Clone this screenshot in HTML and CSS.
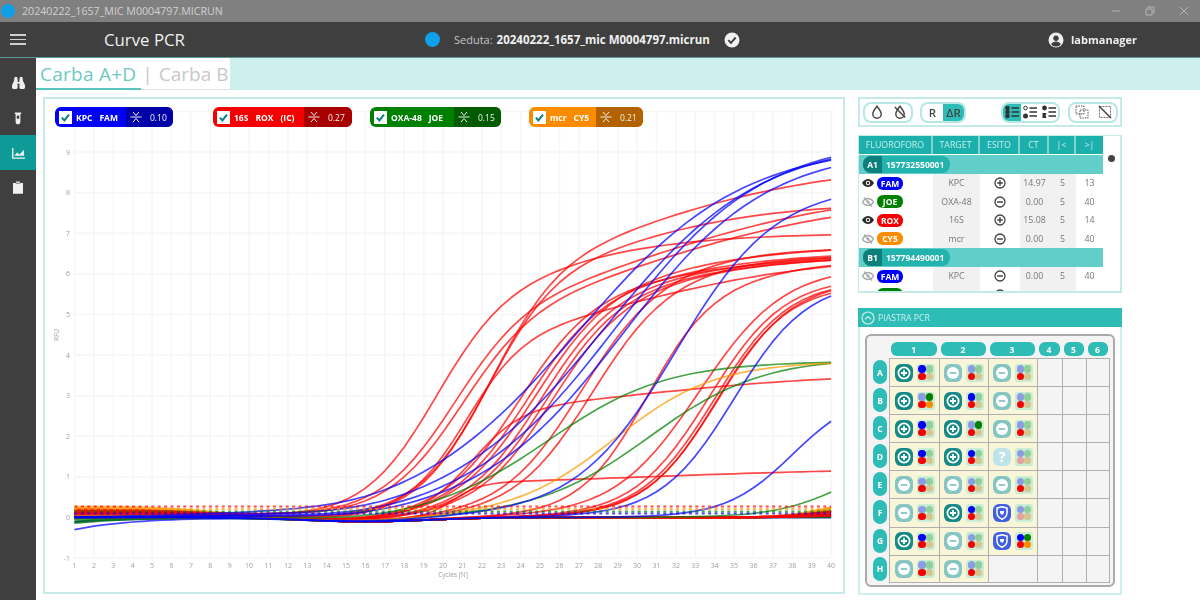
FILE: index.html
```html
<!DOCTYPE html>
<html lang="it">
<head>
<meta charset="utf-8">
<title>Curve PCR</title>
<link rel="stylesheet" href="styles.css">
</head>
<body>
<svg class="defs" width="0" height="0" aria-hidden="true">
  <symbol id="thr" viewBox="0 0 14 12"><path d="M1.500 6H12.500M4 1l3 3.500L10 1M4 11l3-3.500L10 11" fill="none" stroke="currentColor" stroke-width="1"/></symbol>
  <symbol id="chk" viewBox="0 0 12 12"><path d="M2 6.200l2.800 3 5-6.300" fill="none" stroke="#0e7f86" stroke-width="2.200"/></symbol>
  <symbol id="eye" viewBox="0 0 12 8"><path d="M0 4C2 1 4 0 6 0s4 1 6 4c-2 3-4 4-6 4S2 7 0 4z" fill="#2a2a2a"/><circle cx="6" cy="4" r="2.200" fill="#fff"/><circle cx="6" cy="4" r="1.200" fill="#2a2a2a"/></symbol>
  <symbol id="eyeoff" viewBox="0 0 12 10"><path d="M.5 5C2 2.500 4 1.500 6 1.500s4 1 5.500 3.500C10 7.500 8 8.500 6 8.500S2 7.500 .5 5z" fill="none" stroke="#a9a9a9" stroke-width="1.300"/><circle cx="6" cy="5" r="1.500" fill="#a9a9a9"/><path d="M2 .5l8 9" stroke="#a9a9a9" stroke-width="1.200"/></symbol>
  <symbol id="plus" viewBox="0 0 12 12"><circle cx="6" cy="6" r="5" fill="none" stroke="#444" stroke-width="1.300"/><path d="M3.200 6h5.600M6 3.200v5.600" stroke="#444" stroke-width="1.500"/></symbol>
  <symbol id="minus" viewBox="0 0 12 12"><circle cx="6" cy="6" r="5" fill="none" stroke="#444" stroke-width="1.300"/><path d="M3.200 6h5.600" stroke="#444" stroke-width="1.500"/></symbol>
  <symbol id="drop" viewBox="0 0 12 14"><path d="M6 1.200C4 4 1.800 6.500 1.800 9a4.200 4.200 0 0 0 8.400 0C10.200 6.500 8 4 6 1.200z" fill="none" stroke="#444" stroke-width="1.400"/></symbol>
  <symbol id="dropoff" viewBox="0 0 12 14"><path d="M6 1.200C4 4 1.800 6.500 1.800 9a4.200 4.200 0 0 0 8.400 0C10.200 6.500 8 4 6 1.200z" fill="none" stroke="#444" stroke-width="1.400"/><path d="M.8 2l10.400 10.500" stroke="#444" stroke-width="1.400"/></symbol>
  <symbol id="list1" viewBox="0 0 14 14"><circle cx="2.500" cy="3" r="2.300" fill="#333"/><circle cx="2.500" cy="7" r="2.300" fill="#333"/><circle cx="2.500" cy="11" r="2.300" fill="#333"/><path d="M6.500 3H14M6.500 7H14M6.500 11H14" stroke="#333" stroke-width="1.500"/></symbol>
  <symbol id="list2" viewBox="0 0 14 14"><circle cx="2.500" cy="3" r="1.800" fill="none" stroke="#333"/><circle cx="2.500" cy="11" r="2.500" fill="#333"/><path d="M6.500 3H14M6.500 7H14M6.500 11H14" stroke="#333" stroke-width="1.500"/></symbol>
  <symbol id="list3" viewBox="0 0 14 14"><circle cx="2.500" cy="3" r="2.400" fill="#333"/><path d="M.5 8h4L3.500 10.500 4.500 13h-4z" fill="#333"/><path d="M6.500 3H14M6.500 7H14M6.500 11H14" stroke="#333" stroke-width="1.500"/></symbol>
  <symbol id="overlap" viewBox="0 0 14 14"><rect x="1" y="1" width="8" height="8" fill="none" stroke="#555" stroke-dasharray="1.500 1"/><rect x="5" y="5" width="8" height="8" fill="none" stroke="#555" stroke-dasharray="1.500 1"/></symbol>
  <symbol id="noselect" viewBox="0 0 14 14"><rect x="1.500" y="1.500" width="11" height="11" fill="none" stroke="#777" stroke-dasharray="2 1"/><path d="M1 1l12 12" stroke="#444" stroke-width="1.500"/></symbol>
</svg>

<div class="app">
  <div class="titlebar">
    <span class="app-dot"></span>
    <span class="title-text">20240222_1657_MIC M0004797.MICRUN</span>
    <div class="win-controls">
      <svg width="10" height="10" viewBox="0 0 10 10"><path d="M1 5h8" stroke="#b5b5b5" stroke-width="1"/></svg>
      <svg width="10" height="10" viewBox="0 0 10 10"><path d="M3 2.500V1h6v6H7.500M1 3h6v6H1z" fill="none" stroke="#b5b5b5" stroke-width="1"/></svg>
      <svg width="10" height="10" viewBox="0 0 10 10"><path d="M1 1l8 8M9 1l-8 8" stroke="#b5b5b5" stroke-width="1"/></svg>
    </div>
  </div>

  <header class="header">
    <div class="burger"><span></span><span></span><span></span></div>
    <h1 class="page-title">Curve PCR</h1>
    <div class="session">
      <span class="session-dot"></span>
      <span class="session-label">Seduta:</span>
      <strong class="session-name">20240222_1657_mic M0004797.micrun</strong>
      <svg class="session-check" width="16" height="16" viewBox="0 0 16 16"><circle cx="8" cy="8" r="7.500" fill="#f2f2f2"/><path d="M4.300 8.200l2.600 2.600 4.800-5.300" fill="none" stroke="#3f3f3f" stroke-width="1.900"/></svg>
    </div>
    <div class="user">
      <svg width="16" height="16" viewBox="0 0 16 16"><circle cx="8" cy="8" r="7.500" fill="#f0f0f0"/><circle cx="8" cy="6.200" r="2.700" fill="#3f3f3f"/><path d="M3.200 12.600c1-2.200 2.800-3 4.800-3s3.800.8 4.800 3C11.500 14 9.800 14.600 8 14.600s-3.500-.6-4.800-2z" fill="#3f3f3f"/></svg>
      <span>labmanager</span>
    </div>
  </header>

  <div class="main">
    <nav class="sidebar">
      <div class="nav-item">
        <svg width="13" height="13" viewBox="0 0 14 14"><path d="M2.800 1h2.700l.6 3.500v2H7.900v-2L8.500 1h2.700l.6 4L14 10v2.500a1.500 1.500 0 0 1-1.500 1.500h-3A1.500 1.500 0 0 1 8 12.500V8H6v4.500A1.500 1.500 0 0 1 4.500 14h-3A1.500 1.500 0 0 1 0 12.500V10l2.200-5z" fill="#f0f0f0"/></svg>
      </div>
      <div class="nav-item">
        <svg width="8" height="14" viewBox="0 0 10 16"><path d="M1 1h8v2H8v10a3 3 0 0 1-6 0V3H1z" fill="#f0f0f0"/><path d="M3.500 5h3v4h-3z" fill="#3f3f3f"/></svg>
      </div>
      <div class="nav-item active">
        <svg width="13" height="12" viewBox="0 0 14 13"><path d="M.8 1v11H14" fill="none" stroke="#f2f2f2" stroke-width="1.500"/><path d="M2.500 9.500L5.500 6l2.500 2L13 3v6.500z" fill="#f2f2f2"/></svg>
      </div>
      <div class="nav-item">
        <svg width="10" height="13" viewBox="0 0 11 14"><path d="M0 2h3l.6-1.500h3.800L8 2h3v12H0z" fill="#f0f0f0"/><path d="M3 2.300h5" stroke="#3f3f3f" stroke-width=".8"/></svg>
      </div>
    </nav>

    <div class="content">
      <div class="tabs">
        <div class="tab-group">
          <span class="tab tab-active">Carba A+D</span>
          <span class="tab-sep">|</span>
          <span class="tab">Carba B</span>
        </div>
      </div>

      <div class="workspace">
        <section class="chart-panel">
          <div class="legend">
            <div class="chip chip-blue">
              <span class="chip-box"><svg width="11" height="11"><use href="#chk"/></svg></span>
              <span class="chip-main"><b>KPC</b><b>FAM</b></span>
              <span class="chip-thr"><svg width="14" height="12"><use href="#thr"/></svg><i>0.10</i></span>
            </div>
            <div class="chip chip-red">
              <span class="chip-box"><svg width="11" height="11"><use href="#chk"/></svg></span>
              <span class="chip-main"><b>16S</b><b>ROX</b><b>(IC)</b></span>
              <span class="chip-thr"><svg width="14" height="12"><use href="#thr"/></svg><i>0.27</i></span>
            </div>
            <div class="chip chip-green">
              <span class="chip-box"><svg width="11" height="11"><use href="#chk"/></svg></span>
              <span class="chip-main"><b>OXA-48</b><b>JOE</b></span>
              <span class="chip-thr"><svg width="14" height="12"><use href="#thr"/></svg><i>0.15</i></span>
            </div>
            <div class="chip chip-orange">
              <span class="chip-box"><svg width="11" height="11"><use href="#chk"/></svg></span>
              <span class="chip-main"><b>mcr</b><b>CY5</b></span>
              <span class="chip-thr"><svg width="14" height="12"><use href="#thr"/></svg><i>0.21</i></span>
            </div>
          </div>
          <svg id="chart" class="chart" viewBox="45 99 798 493"></svg>
        </section>

        <aside class="side">
          <div class="toolbar">
            <div class="tool-group tg-drop">
              <span class="tool"><svg width="12" height="14"><use href="#drop"/></svg></span>
              <span class="tool"><svg width="12" height="14"><use href="#dropoff"/></svg></span>
            </div>
            <div class="tool-group tg-r">
              <span class="tool tool-text">R</span>
              <span class="tool tool-text on">ΔR</span>
            </div>
            <div class="tool-group tg-list">
              <span class="tool on"><svg width="14" height="14"><use href="#list1"/></svg></span>
              <span class="tool"><svg width="14" height="14"><use href="#list2"/></svg></span>
              <span class="tool"><svg width="14" height="14"><use href="#list3"/></svg></span>
            </div>
            <div class="tool-group tg-sel">
              <span class="tool"><svg width="14" height="14"><use href="#overlap"/></svg></span>
              <span class="tool"><svg width="14" height="14"><use href="#noselect"/></svg></span>
            </div>
          </div>

          <div class="table-panel">
            <span class="scroll-dot"></span>
            <div class="tbl">
              <div class="tr th"><span>FLUOROFORO</span><span>TARGET</span><span>ESITO</span><span>CT</span><span>|&lt;</span><span>&gt;|</span></div>
              <div class="well"><span class="well-pill"><b>A1</b><em>157732550001</em></span></div>
              <div class="tr row">
                <span class="fl"><svg class="ic-eye" width="12" height="10"><use href="#eye"/></svg><b class="dye d-fam">FAM</b></span>
                <span class="shade">KPC</span><span><svg width="12" height="12"><use href="#plus"/></svg></span><span class="shade">14.97</span><span class="shade">5</span><span>13</span>
              </div>
              <div class="tr row">
                <span class="fl"><svg class="ic-eye" width="12" height="10"><use href="#eyeoff"/></svg><b class="dye d-joe">JOE</b></span>
                <span class="shade">OXA-48</span><span><svg width="12" height="12"><use href="#minus"/></svg></span><span class="shade">0.00</span><span class="shade">5</span><span>40</span>
              </div>
              <div class="tr row">
                <span class="fl"><svg class="ic-eye" width="12" height="10"><use href="#eye"/></svg><b class="dye d-rox">ROX</b></span>
                <span class="shade">16S</span><span><svg width="12" height="12"><use href="#plus"/></svg></span><span class="shade">15.08</span><span class="shade">5</span><span>14</span>
              </div>
              <div class="tr row">
                <span class="fl"><svg class="ic-eye" width="12" height="10"><use href="#eyeoff"/></svg><b class="dye d-cy5">CY5</b></span>
                <span class="shade">mcr</span><span><svg width="12" height="12"><use href="#minus"/></svg></span><span class="shade">0.00</span><span class="shade">5</span><span>40</span>
              </div>
              <div class="well"><span class="well-pill"><b>B1</b><em>157794490001</em></span></div>
              <div class="tr row">
                <span class="fl"><svg class="ic-eye" width="12" height="10"><use href="#eyeoff"/></svg><b class="dye d-fam">FAM</b></span>
                <span class="shade">KPC</span><span><svg width="12" height="12"><use href="#minus"/></svg></span><span class="shade">0.00</span><span class="shade">5</span><span>40</span>
              </div>
              <div class="tr row">
                <span class="fl"><svg class="ic-eye" width="12" height="10"><use href="#eye"/></svg><b class="dye d-joe">JOE</b></span>
                <span class="shade">OXA-48</span><span><svg width="12" height="12"><use href="#plus"/></svg></span><span class="shade">12.73</span><span class="shade">5</span><span>19</span>
              </div>
            </div>
          </div>

          <div class="plate-head">
            <svg width="14" height="14" viewBox="0 0 14 14"><circle cx="7" cy="7" r="6" fill="none" stroke="#cdeeec" stroke-width="1.200"/><path d="M4 8.300l3-2.800 3 2.800" fill="none" stroke="#cdeeec" stroke-width="1.200"/></svg>
            <span>PIASTRA PCR</span>
          </div>
          <div class="plate-panel">
            <div id="plate" class="plate"></div>
          </div>
        </aside>
      </div>
    </div>
  </div>
</div>
<script src="script.js"></script>
</body>
</html>
```

FILE: styles.css
```css
* { box-sizing: border-box; }
html, body { margin: 0; padding: 0; background: #fff; }
body { width: 1200px; height: 600px; overflow: hidden; font-family: "Open Sans", "Noto Sans", sans-serif; }
.defs { position: absolute; }
.app { width: 1200px; height: 600px; display: flex; flex-direction: column; filter: blur(0.35px); }

.titlebar { height: 22px; background: #808080; display: flex; align-items: center; padding-left: 1px; flex: none; }
.app-dot { width: 14px; height: 14px; border-radius: 50%; background: #0ea0e8; }
.title-text { margin-left: 7px; font-size: 10.650px; color: #d0d0d0; }
.win-controls { margin-left: auto; display: flex; gap: 24px; padding-right: 11px; }

.header { height: 36px; background: #3f3f3f; border-bottom: 1px solid #5b9a98; display: flex; align-items: center; flex: none; }
.burger { width: 16px; margin-left: 10px; display: flex; flex-direction: column; gap: 3px; }
.burger span { height: 1.500px; background: #cfcfcf; }
.page-title { margin: 0 0 0 78px; font-size: 16.800px; font-weight: 400; color: #f0f0f0; width: 321px; white-space: nowrap; }
.session { display: flex; align-items: center; }
.session-dot { width: 15px; height: 15px; border-radius: 50%; background: #0ea0e8; }
.session-label { margin-left: 14px; font-size: 11px; color: #c4c4c4; }
.session-name { margin-left: 4px; font-size: 11.500px; font-weight: 700; color: #f0f0f0; white-space: nowrap; }
.session-check { margin-left: 14px; flex: none; }
.user { margin-left: auto; margin-right: 63px; display: flex; align-items: center; gap: 7px; color: #eee; font-size: 11px; font-weight: 700; }

.main { flex: 1; display: flex; min-height: 0; }
.sidebar { width: 36px; background: #3f3f3f; flex: none; padding-top: 7px; display: flex; flex-direction: column; }
.nav-item { height: 35px; display: flex; align-items: center; justify-content: center; }
.nav-item.active { background: #0e9a96; }

.content { flex: 1; min-width: 0; display: flex; flex-direction: column; }
.tabs { height: 32px; background: #cdefee; flex: none; }
.tab-group { width: 194px; height: 32px; background: #fff; border-bottom: 1px solid #ddd; display: flex; align-items: center; padding-left: 4px; position: relative; font-size: 19px; line-height: 30px; white-space: nowrap; }
.tab-group::after { content: ""; position: absolute; left: 0; bottom: -1px; width: 105px; height: 2px; background: #56c5c0; }
.tab { color: #c8c8c8; }
.tab-active { color: #6ec9c4; letter-spacing: .25px; }
.tab-sep { color: #c8c8c8; margin: 0 6px; }

.workspace { flex: 1; display: flex; align-items: flex-start; padding: 7px 0 0 7px; min-height: 0; }
.chart-panel { width: 802px; height: 497px; border: 2px solid #c4ebe8; position: relative; flex: none; }
.chart { display: block; width: 798px; height: 493px; }
.legend { position: absolute; left: 10px; top: 8px; display: flex; }
.chip { height: 20px; border-radius: 6px; display: flex; align-items: center; overflow: hidden; color: #fff; font-size: 8.500px; }
.chip-box { width: 13px; height: 13px; background: #fff; margin-left: 4px; display: flex; align-items: center; justify-content: center; flex: none; }
.chip-main { display: flex; align-items: center; height: 100%; flex: 1; gap: 7px; padding-left: 4px; white-space: nowrap; }
.chip-main b { font-weight: 700; }
.chip-thr { display: flex; align-items: center; height: 100%; padding-left: 3px; gap: 7px; color: #f0f0f0; }
.chip-thr i { font-style: normal; font-size: 8.500px; }
.chip-blue { width: 118px; background: #0000f5; }
.chip-blue .chip-thr { background: #0000a8; width: 47px; }
.chip-red { width: 139px; margin-left: 40px; background: #f50000; }
.chip-red .chip-thr { background: #a80000; width: 48px; }
.chip-green { width: 131px; margin-left: 18px; background: #008000; }
.chip-green .chip-thr { background: #005a00; width: 47px; }
.chip-orange { width: 114px; margin-left: 28px; background: #fb8c00; }
.chip-orange .chip-thr { background: #b36200; width: 47px; }

.side { width: 264px; margin-left: 13px; flex: none; }
.toolbar { height: 30px; border: 2px solid #c4ebe8; display: flex; align-items: center; padding-left: 3px; }
.tool-group { height: 21px; border: 2px solid #b5e8e5; border-radius: 8px; display: flex; align-items: center; overflow: hidden; }
.tool { flex: 1; height: 100%; display: flex; align-items: center; justify-content: center; }
.tool-text { font-size: 11.500px; font-weight: 600; color: #444; }
.tool.on { background: #2dbcb6; }
.tg-drop { width: 50px; }
.tg-r { width: 46px; margin-left: 7px; }
.tg-r .tool:first-child { flex: none; width: 21px; }
.tg-list { width: 59px; margin-left: 35px; }
.tg-sel { width: 50px; margin-left: 8px; }

.table-panel { margin-top: 8px; height: 158px; border: 2px solid #c4ebe8; border-width: 1px 2px 2px 1px; overflow: hidden; position: relative; }
.scroll-dot { position: absolute; right: 5px; top: 19px; width: 7px; height: 7px; border-radius: 50%; background: #444; }
.tbl { width: 244px; }
.tr { display: grid; grid-template-columns: 74px 47px 40px 29px 27px 27px; }
.th { height: 18px; margin-bottom: 1px; background: #1cb0ac; color: #c5efec; font-size: 8.800px; }
.th span { display: flex; align-items: center; justify-content: center; border-right: 2px solid #7fd4d0; }
.th span:last-child { border-right: 0; }
.well { height: 19px; background: #62cec9; display: flex; align-items: center; padding-left: 4px; }
.well-pill { display: flex; height: 17px; width: 87px; background: #22b3ae; border-radius: 8px; overflow: hidden; align-items: center; color: #fff; font-size: 8.500px; }
.well-pill b { width: 19px; height: 100%; background: #0d7f7b; display: flex; align-items: center; justify-content: center; }
.well-pill em { font-style: normal; font-weight: 700; padding-left: 4px; }
.row { height: 18.500px; color: #777; font-size: 8.800px; }
.row > span { display: flex; align-items: center; justify-content: center; }
.row > span.shade { background: #f1f1f1; }
.row > span.fl { justify-content: flex-start; padding-left: 3px; background: #fff; }
.ic-eye { flex: none; }
.dye { margin-left: 3px; height: 13px; width: 26px; border-radius: 6px; color: #fff; font-size: 8.500px; display: flex; align-items: center; justify-content: center; }
.d-fam { background: #0000f5; }
.d-joe { background: #008000; }
.d-rox { background: #f50000; }
.d-cy5 { background: #fb8c00; }

.plate-head { margin-top: 15px; height: 19px; background: #2dbcb6; display: flex; align-items: center; padding-left: 3px; gap: 3px; color: #cdeeec; font-size: 8.700px; }
.plate-panel { height: 268px; border: 2px solid #cdefee; border-top: 0; padding: 7px 5px 0 5px; }
.plate { width: 250px; height: 253px; border: 2px solid #aaa; border-radius: 6px; background: #f4f4f4; display: grid; grid-template-columns: 22px 49.500px 49px 49px 25px 24px 24px; grid-template-rows: 22px repeat(8, 28.100px); }
.col-label { background: #2dbcb6; color: #fff; font-size: 8.500px; font-weight: 700; border-radius: 6px; height: 14px; margin: 6px 2px 0 2px; display: flex; align-items: center; justify-content: center; }
.row-label { background: #2dbcb6; color: #fff; font-size: 8.500px; font-weight: 700; border-radius: 7px; width: 14px; height: 24px; margin: 2px 0 0 6px; display: flex; align-items: center; justify-content: center; }
.corner { display: block; }
.cell { border-top: 1.500px solid #b0b0b0; border-left: 1.500px solid #b0b0b0; display: flex; align-items: center; padding-left: 4.500px; gap: 4px; }
.cell.filled { background: #f8f5d8; }
.cell.last-row { border-bottom: 1.500px solid #b0b0b0; }
.cell.last-col { border-right: 1.500px solid #b0b0b0; }
.res { width: 18px; height: 18px; border-radius: 6px; display: flex; align-items: center; justify-content: center; flex: none; }
.res-pos { background: #148a86; }
.res-neg { background: #85c5c2; }
.res-unk { background: #bfe3ea; color: #fff; font-weight: 700; font-size: 14px; }
.res-shield { background: #4060e0; }
.dots { width: 18px; height: 18px; border-radius: 3px; background: #c8ecd4; display: grid; grid-template-columns: 7.300px 7.300px; grid-template-rows: 7.300px 7.300px; align-content: center; justify-content: center; flex: none; }
.dot { border-radius: 50%; }
.dot-b { background: #0000f5; }
.dot-bf { background: #8c9ce0; }
.dot-g { background: #008000; }
.dot-gf { background: #8fcf9a; }
.dot-r { background: #f50000; }
.dot-rf { background: #e2a0a0; }
.dot-o { background: #fb8c00; }
.dot-of { background: #d8c48e; }

.grid-line { stroke: #f6f6f6; stroke-width: 1.500; }
.tick { font-family: "Open Sans", sans-serif; font-size: 7px; fill: #a0a0a0; }
.axis-name { font-family: "Open Sans", sans-serif; font-size: 6.500px; fill: #a0a0a0; }
.curve { fill: none; stroke-width: 1.700; stroke-opacity: .72; stroke-linejoin: round; }
.thr-line { fill: none; stroke-width: 2; stroke-dasharray: 3 3.400; stroke-opacity: .7; }
```

FILE: script.js
```js
(function () {
  var NS = 'http://www.w3.org/2000/svg';
  var chart = document.getElementById('chart');
  var X0 = 74.5, DX = 19.4, Y0 = 517.5, DY = 40.6;
  var sx = function (t) { return X0 + t * DX; };
  var sy = function (v) { return Y0 - v * DY; };
  var RED = '#ff0000', BLUE = '#0000ff', GREEN = '#008000', ORANGE = '#ff9900';

  function add(tag, attrs, text) {
    var el = document.createElementNS(NS, tag);
    for (var k in attrs) el.setAttribute(k, attrs[k]);
    if (text !== undefined) el.textContent = text;
    chart.appendChild(el);
    return el;
  }

  var i;
  for (i = 0; i < 40; i++) {
    add('line', { x1: sx(i), x2: sx(i), y1: 111, y2: 558, 'class': 'grid-line' });
    add('text', { x: sx(i), y: 568, 'text-anchor': 'middle', 'class': 'tick' }, i + 1);
  }
  for (i = -1; i <= 10; i++) {
    add('line', { x1: X0, x2: sx(39), y1: sy(i), y2: sy(i), 'class': 'grid-line' });
    if (i < 10) add('text', { x: 70, y: sy(i) + 2.5, 'text-anchor': 'end', 'class': 'tick' }, i);
  }
  add('text', { x: 453, y: 577, 'text-anchor': 'middle', 'class': 'axis-name' }, 'Cycles [N]');
  add('text', { x: 59, y: 335, 'text-anchor': 'middle', 'class': 'axis-name', transform: 'rotate(-90 59 335)' }, 'RFU');

  function L(t, x0, k) { return 1 / (1 + Math.exp(-(t - x0) / k)); }
  function base(t, s) {
    var head = s >= 0 ? s * Math.exp(-Math.pow(t / 8.5, 3)) : s * Math.exp(-t / 3);
    var dip = -0.1 * Math.exp(-Math.pow((t - 15) / 4.5, 2));
    return head + dip;
  }
  function draw(color, fn) {
    var d = '';
    for (var t = 0; t <= 39.001; t += 0.5) {
      d += (t === 0 ? 'M' : 'L') + sx(t).toFixed(1) + ' ' + sy(fn(t)).toFixed(1);
    }
    add('path', { d: d, stroke: color, 'class': 'curve' });
  }
  function rise(color, p, s) {
    draw(color, function (t) {
      var v = p[0] * L(t, p[1], p[2]);
      if (p[3]) v += p[3] * L(t, p[4], p[5]);
      return v + base(t, s);
    });
  }

  // flat (negative) traces: [colour, start, late amplitude, late midpoint]
  var flat = [
    [BLUE, -0.3, 0, 0], [BLUE, -0.12, 0.04, 38], [BLUE, -0.1, 0, 0], [BLUE, 0.06, 0.05, 38],
    [GREEN, -0.14, 0.1, 38], [GREEN, -0.1, 0.2, 38], [GREEN, -0.06, 0.05, 38], [GREEN, 0.04, 0.3, 38.5],
    [GREEN, 0.12, 0.1, 38], [GREEN, 0.18, 0.25, 38], [GREEN, -0.02, 0, 0],
    [ORANGE, 0.27, 0.5, 39], [ORANGE, 0.24, 0.4, 38.5], [ORANGE, 0.2, 0.25, 38], [ORANGE, 0.05, 0.6, 39.5],
    [ORANGE, -0.02, 0.15, 38],
    [RED, 0.2, 0.2, 38], [RED, 0.17, 0.1, 38], [RED, 0.14, 0.25, 38.5], [RED, 0.11, 0.15, 38],
    [RED, 0.08, 0.3, 39], [RED, 0.05, 0.1, 38], [RED, 0.02, 0.2, 38], [RED, 0.16, 0.05, 38],
    [RED, 0.12, 0.06, 38], [RED, 0.07, 0.12, 38]
  ];
  flat.forEach(function (f) {
    rise(f[0], [f[2], f[3] || 38, 1.1], f[1]);
  });

  var reds = [
    [6.0, 21.5, 1.8, 2.7, 30, 5],
    [6.0, 21.3, 1.8, 1.75, 29, 4],
    [5.3, 18.6, 1.85, 1.7, 24, 4],
    [4.9, 19.6, 1.9, 3.2, 30, 5.5],
    [4.8, 20.0, 1.9, 3.1, 30, 5.5],
    [4.2, 20.2, 1.5, 2.25, 29, 5],
    [5.9, 29.5, 1.75, 0.4, 36, 2],
    [5.5, 23.7, 2, 1.2, 30, 4],
    [5.4, 23.3, 1.95, 1.15, 30, 4],
    [5.35, 24.0, 1.9, 1.15, 30, 4],
    [5.3, 24.3, 1.9, 1.15, 30, 4],
    [5.45, 22.9, 1.95, 1.0, 30, 4],
    [5.25, 24.6, 1.9, 1.2, 30, 4],
    [5.6, 26, 2, 1.05, 30, 3],
    [5.6, 26.6, 2, 0.85, 30, 3],
    [5.92, 32.7, 1.95],
    [5.85, 33, 1.9],
    [5.85, 33.2, 1.9],
    [5.75, 33.1, 1.85],
    [6.2, 32.2, 2.2],
    [2.6, 20.5, 1.3, 0.95, 30, 5],
    [0.8, 19.5, 0.7, 0.42, 30, 6]
  ];
  reds.forEach(function (p, n) { rise(RED, p, (n % 5) * 0.03); });

  rise(GREEN, [3.85, 24.5, 3], 0.02);
  rise(GREEN, [3.95, 29.6, 2.9], -0.02);
  rise(GREEN, [1.6, 39.8, 1.8], 0);
  rise(ORANGE, [3.85, 27.8, 2.6], 0.05);

  var blues = [
    [9.2, 26, 4.2],
    [9.3, 27.3, 4],
    [9.35, 27.9, 3.8],
    [9.1, 28.3, 3.7],
    [8.2, 31, 2.6],
    [5.85, 34, 1.9],
    [3.1, 37, 1.7]
  ];
  blues.forEach(function (p) { rise(BLUE, p, 0); });

  [[0.27, RED], [0.21, ORANGE], [0.15, GREEN], [0.1, BLUE]].forEach(function (h) {
    add('path', { d: 'M' + X0 + ' ' + sy(h[0]) + 'H' + sx(39), stroke: h[1], 'class': 'thr-line' });
  });

  // plate
  var plate = document.getElementById('plate');
  function div(cls, text) {
    var el = document.createElement('div');
    el.className = cls;
    if (text !== undefined) el.textContent = text;
    return el;
  }
  var ICONS = {
    p: '<svg width="14" height="14" viewBox="0 0 14 14"><circle cx="7" cy="7" r="5.600" fill="none" stroke="#fff" stroke-width="1.800"/><path d="M4 7h6M7 4v6" stroke="#fff" stroke-width="1.800"/></svg>',
    n: '<svg width="14" height="14" viewBox="0 0 14 14"><circle cx="7" cy="7" r="6" fill="#fff"/><path d="M3.800 7h6.400" stroke="#85c5c2" stroke-width="1.800"/></svg>',
    s: '<svg width="12" height="14" viewBox="0 0 12 14"><path d="M1 2l5-1.300L11 2v5c0 3-2.200 5-5 6.300C3.200 12 1 10 1 7z" fill="none" stroke="#fff" stroke-width="1.500"/><path d="M4 5h4v2L6 9 4 7z" fill="#fff"/></svg>'
  };
  function dots(spec) {
    var wrap = div('dots');
    var names = ['b', 'g', 'r', 'o'];
    for (var n = 0; n < 4; n++) {
      var c = spec.charAt(n);
      wrap.appendChild(div('dot dot-' + names[n] + (c === '1' ? '' : 'f')));
    }
    return wrap;
  }
  // result code + dots (blue, green, red, orange; 1 = lit)
  var data = {
    A: ['p1010', 'n0010', 'n0010'],
    B: ['p0111', 'p1010', 'n0010'],
    C: ['p1010', 'p0110', 'n0010'],
    D: ['p1010', 'p1010', 'u0000'],
    E: ['n0010', 'n0010', 'n0010'],
    F: ['n0010', 'p1010', 's0000'],
    G: ['p1010', 'n0010', 's1111'],
    H: ['n0010', 'n0010', null]
  };
  plate.appendChild(div('corner'));
  for (i = 1; i <= 6; i++) plate.appendChild(div('col-label', i));
  Object.keys(data).forEach(function (r, ri, rows) {
    plate.appendChild(div('row-label', r));
    for (var c = 0; c < 6; c++) {
      var v = c < 3 ? data[r][c] : null;
      var cell = div('cell' + (v ? ' filled' : '') + (ri === rows.length - 1 ? ' last-row' : '') + (c === 5 ? ' last-col' : ''));
      if (v) {
        var k = v.charAt(0);
        var res = div('res ' + { p: 'res-pos', n: 'res-neg', u: 'res-unk', s: 'res-shield' }[k]);
        if (k === 'u') res.textContent = '?'; else res.innerHTML = ICONS[k];
        cell.appendChild(res);
        cell.appendChild(dots(v.slice(1)));
      }
      plate.appendChild(cell);
    }
  });
})();
```
